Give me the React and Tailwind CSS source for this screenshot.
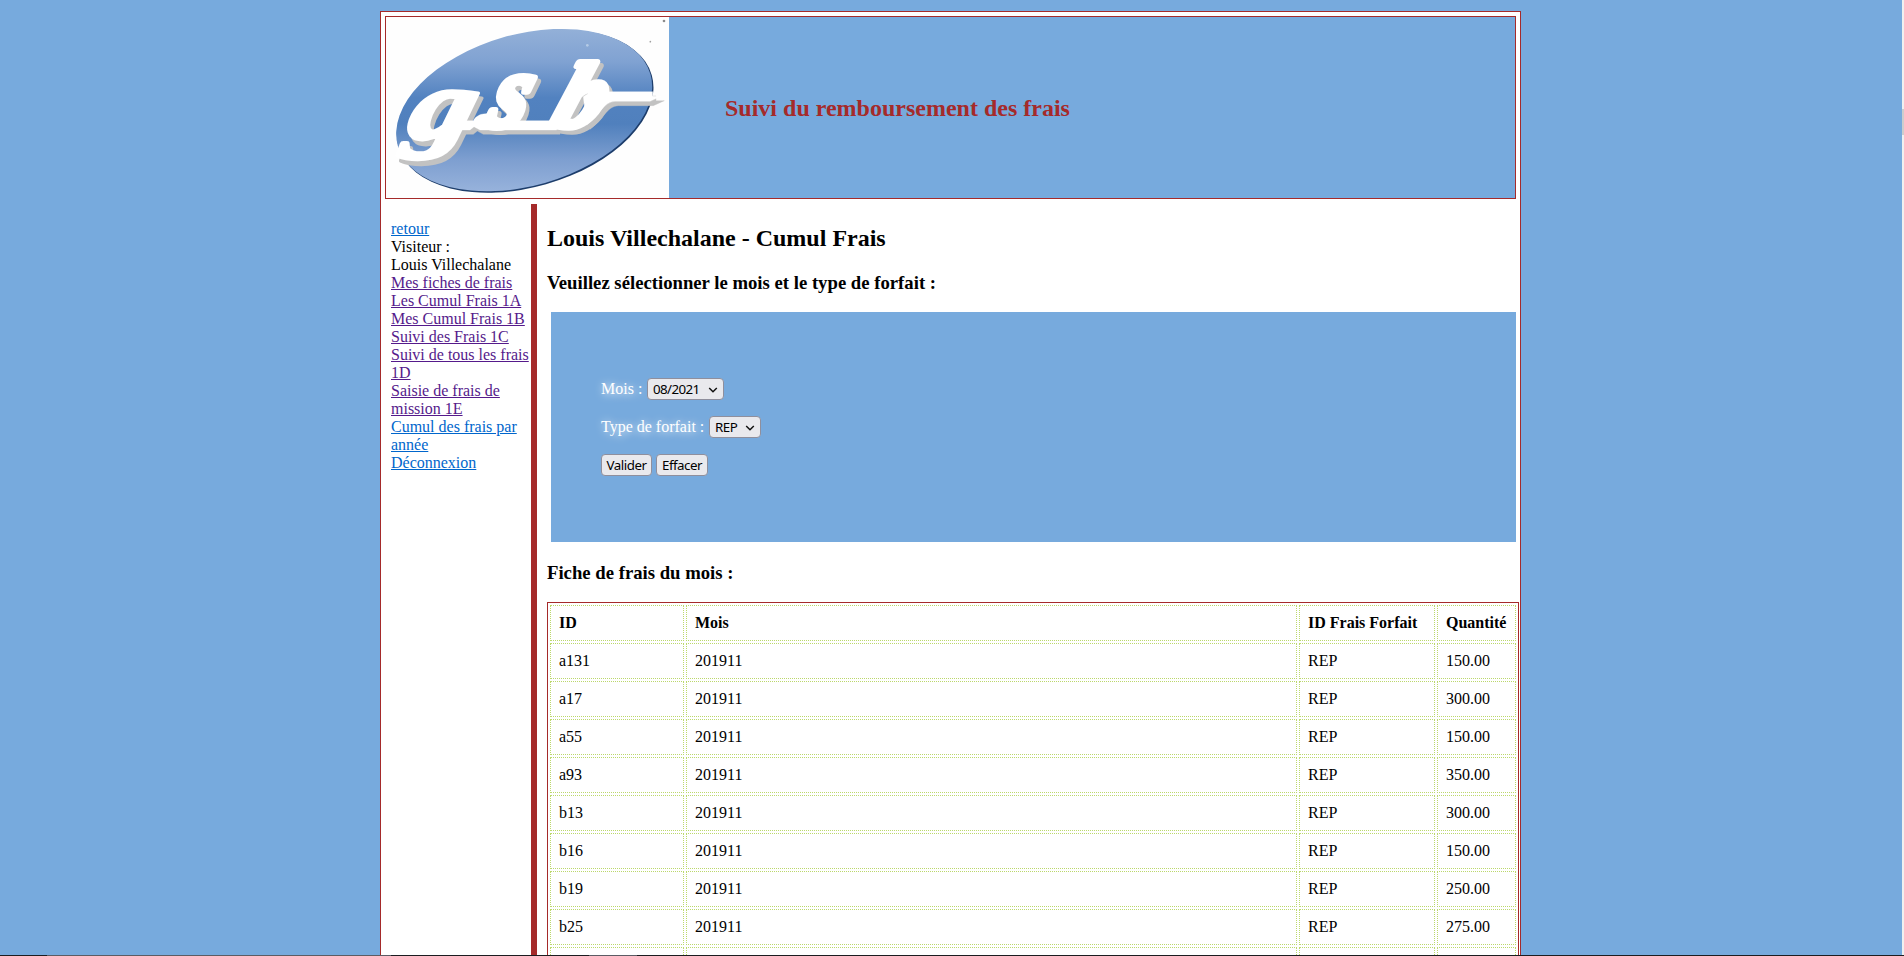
import React from 'react';

const purple = 'text-[#551a8b]';
const blue = 'text-[#0066cc]';

const links = [
  { text: 'Mes fiches de frais', tone: purple },
  { text: 'Les Cumul Frais 1A', tone: purple },
  { text: 'Mes Cumul Frais 1B', tone: purple },
  { text: 'Suivi des Frais 1C', tone: purple },
  { text: 'Suivi de tous les frais 1D', tone: purple },
  { text: 'Saisie de frais de mission 1E', tone: purple },
  { text: 'Cumul des frais par année', tone: blue },
  { text: 'Déconnexion', tone: blue },
];

const rows = [
  ['a131', '201911', 'REP', '150.00'],
  ['a17', '201911', 'REP', '300.00'],
  ['a55', '201911', 'REP', '150.00'],
  ['a93', '201911', 'REP', '350.00'],
  ['b13', '201911', 'REP', '300.00'],
  ['b16', '201911', 'REP', '150.00'],
  ['b19', '201911', 'REP', '250.00'],
  ['b25', '201911', 'REP', '275.00'],
  ['', '', '', ''],
];

function Letters() {
  return (
    <g fontFamily="'Liberation Serif', serif" fontWeight="bold" fontStyle="italic" strokeLinejoin="round">
      <text strokeWidth="14" transform="translate(106 415) skewX(-14) scale(1.3 1)" fontSize="295">g</text>
      <text strokeWidth="24" transform="translate(345 378) skewX(-18) scale(0.9 1)" fontSize="312">s</text>
      <text strokeWidth="22" transform="translate(538 378) skewX(-19) scale(1.05 1)" fontSize="274">b</text>
      <path strokeWidth="1" d="M225 362H310C318 345 345 335 365 346C385 352 400 362 430 362H560V390H330L312 380L300 390H215ZM640 290C660 274 675 275 700 275H848V289H873L840 304H735C700 306 690 345 650 375Z" />
    </g>
  );
}

function Logo() {
  return (
    <svg className="block h-[181px] w-[283px] shrink-0 bg-[#fefefe]" viewBox="48 51 849 543">
      <defs>
        <linearGradient id="oval" gradientUnits="userSpaceOnUse" x1="464" y1="87" x2="464" y2="578" gradientTransform="rotate(15.9 464 332)">
          <stop offset="0" stopColor="#93b0d8" />
          <stop offset="0.2" stopColor="#80a2d2" />
          <stop offset="0.42" stopColor="#5282c0" />
          <stop offset="0.58" stopColor="#5080bd" />
          <stop offset="0.8" stopColor="#7e9fd0" />
          <stop offset="1" stopColor="#98b3dc" />
        </linearGradient>
      </defs>
      <g transform="rotate(-15.9 464 332)">
        <ellipse cx="465" cy="334" rx="395" ry="228" fill="#1d3d6b" />
        <ellipse cx="463" cy="330" rx="394" ry="227" fill="url(#oval)" />
      </g>
      <g transform="translate(10 13)" fill="#c2c2c2" stroke="#c2c2c2"><Letters /></g>
      <g fill="#ffffff" stroke="#ffffff"><Letters /></g>
      <circle cx="882" cy="63" r="4" fill="#8c8c8c" />
      <circle cx="841" cy="125" r="2.5" fill="#a0a0a0" />
      <circle cx="652" cy="136" r="4" fill="#b5cbe6" />
    </svg>
  );
}

function Select({ value, className }) {
  return (
    <button className={`flex h-[22px] items-center justify-between rounded-[4px] border border-[#8f8f9d] bg-[#e9e9ed] pr-[5px] pl-[5px] font-['Noto_Sans',sans-serif] text-[13.33px] leading-none text-black ${className}`}>
      <span>{value}</span>
      <svg className="h-[6px] w-[10px]" viewBox="0 0 10 6" fill="none" stroke="#111" strokeWidth="1.5"><path d="M1.2 1L5 4.7L8.8 1" /></svg>
    </button>
  );
}

function Button({ children, className }) {
  return (
    <button className={`flex h-[22px] items-center justify-center rounded-[4px] border border-[#8f8f9d] bg-[#e9e9ed] pt-px font-['Noto_Sans',sans-serif] text-[13.33px] leading-none text-black ${className}`}>
      {children}
    </button>
  );
}

const cell = 'h-9 border border-dotted border-[#bcd86c] px-2 py-0 text-left leading-[18px]';
const glow = 'whitespace-pre text-white [text-shadow:1px_1px_8px_white]';

export default function App() {
  return (
    <div className="flex h-[956px] w-full flex-col overflow-hidden bg-[#77aadd] font-['Liberation_Serif',serif] text-base leading-[18px] text-black">
      <div className="flex h-[955px] shrink-0 overflow-hidden">
        <div className="flex-1 pt-[11px] pl-[380px]">
          <div className="h-[1000px] w-[1141px] border border-[#a52a2a] bg-white pt-1">
            <header className="ml-1 flex h-[183px] w-[1131px] items-center border border-[#a52a2a] bg-[#77aadd]">
              <Logo />
              <h1 className="ml-[56px] text-[24px] leading-[28px] font-bold whitespace-nowrap text-[#a52a2a]">Suivi du remboursement des frais</h1>
            </header>
            <div className="mt-[5px] flex">
              <nav className="h-[800px] w-[156px] shrink-0 border-r-[6px] border-[#a52a2a] pt-4 pl-[10px]">
                <ul>
                  <li><a className="text-[#0066cc] underline">retour</a></li>
                  <li>Visiteur :<br />Louis Villechalane</li>
                  {links.map((l) => (
                    <li key={l.text}><a className={`underline ${l.tone}`}>{l.text}</a></li>
                  ))}
                </ul>
              </nav>
              <main className="w-[972px] shrink-0 pt-5 ml-[10px]">
                <h2 className="text-[24px] leading-[28px] font-bold">Louis Villechalane - Cumul Frais</h2>
                <h3 className="mt-5 text-[18.72px] leading-[21px] font-bold">Veuillez sélectionner le mois et le type de forfait :</h3>
                <form className="mt-[19px] ml-1 flex h-[230px] w-[965px] flex-col gap-4 bg-[#77aadd] pt-[66px] pl-[50px]">
                  <div className="flex h-[22px] items-center">
                    <label className={`w-[46px] ${glow}`}>Mois :</label>
                    <Select value="08/2021" className="w-[77px] pt-px tracking-[-0.6px]" />
                  </div>
                  <div className="flex h-[22px] items-center">
                    <label className={`w-[108px] ${glow}`}>Type de forfait :</label>
                    <Select value="REP" className="w-[52px] pt-px tracking-[-0.5px]" />
                  </div>
                  <div className="flex gap-1">
                    <Button className="w-[51px] tracking-[-0.5px]">Valider</Button>
                    <Button className="w-[52px] tracking-[-0.5px]">Effacer</Button>
                  </div>
                </form>
                <h3 className="mt-[20px] text-[18.72px] leading-[21px] font-bold">Fiche de frais du mois :</h3>
                <table className="mt-[19px] w-[972px] table-fixed border-separate border-spacing-[2px] border border-[#a52a2a]">
                  <colgroup>
                    <col className="w-[134px]" />
                    <col className="w-[611px]" />
                    <col className="w-[136px]" />
                    <col className="w-[79px]" />
                  </colgroup>
                  <thead>
                    <tr>
                      {['ID', 'Mois', 'ID Frais Forfait', 'Quantité'].map((h) => (
                        <th key={h} className={`${cell} font-bold whitespace-nowrap`}>{h}</th>
                      ))}
                    </tr>
                  </thead>
                  <tbody>
                    {rows.map((r) => (
                      <tr key={r[0]}>
                        {r.map((v, i) => <td key={i} className={cell}>{v}</td>)}
                      </tr>
                    ))}
                  </tbody>
                </table>
              </main>
            </div>
          </div>
        </div>
        <div className="w-[2px] shrink-0 bg-[#f0f0f0] pt-[109px]">
          <div className="h-[26px] bg-[#cdcdcd]" />
        </div>
      </div>
      <div className="flex h-px shrink-0 bg-[#1c1c20]">
        <div className="w-[47px]" />
        <div className="w-[344px] bg-[#5c5c64]" />
        <div className="w-[198px]" />
        <div className="w-[48px] bg-[#5c5c64]" />
      </div>
    </div>
  );
}
